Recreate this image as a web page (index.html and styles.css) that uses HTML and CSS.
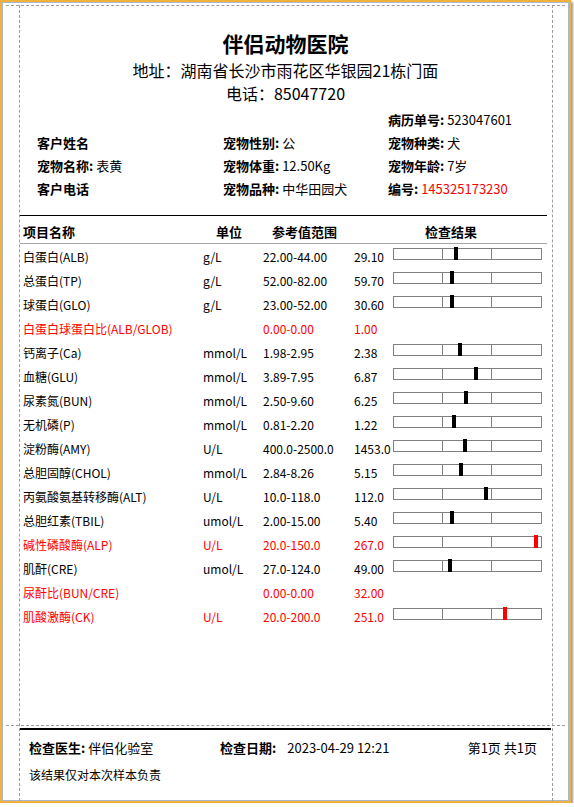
FILE: index.html
```html
<!DOCTYPE html>
<html lang="zh-CN">
<head>
<meta charset="utf-8">
<title>伴侣动物医院 检验报告</title>
<link rel="stylesheet" href="styles.css">
</head>
<body>
<div class="page">
  <div class="guide guide-h guide-top"></div>
  <div class="guide guide-h guide-bottom"></div>
  <div class="guide guide-v guide-left"></div>
  <div class="guide guide-v guide-right"></div>

  <header class="head">
    <h1 class="title">伴侣动物医院</h1>
    <p class="sub">地址：湖南省长沙市雨花区华银园21栋门面</p>
    <p class="sub">电话：85047720</p>
  </header>

  <div class="info">
    <div></div><div></div><div><b>病历单号:</b> 523047601</div>
    <div><b>客户姓名</b></div><div><b>宠物性别:</b> 公</div><div><b>宠物种类:</b> 犬</div>
    <div><b>宠物名称:</b> 表黄</div><div><b>宠物体重:</b> 12.50Kg</div><div><b>宠物年龄:</b> 7岁</div>
    <div><b>客户电话</b></div><div><b>宠物品种:</b> 中华田园犬</div><div><b>编号:</b> <span class="red">145325173230</span></div>
  </div>

  <div class="rule"></div>

  <div class="table">
    <div class="row thead">
      <div class="c-name">项目名称</div>
      <div class="c-unit">单位</div>
      <div class="c-ref">参考值范围</div>
      <div class="c-res">检查结果</div>
    </div>

    <div class="row"><div>白蛋白(ALB)</div><div>g/L</div><div>22.00-44.00</div><div>29.10</div><div class="bar"><i></i><i></i><i></i><span class="mark" style="left:60px"></span></div></div>
    <div class="row"><div>总蛋白(TP)</div><div>g/L</div><div>52.00-82.00</div><div>59.70</div><div class="bar"><i></i><i></i><i></i><span class="mark" style="left:56px"></span></div></div>
    <div class="row"><div>球蛋白(GLO)</div><div>g/L</div><div>23.00-52.00</div><div>30.60</div><div class="bar"><i></i><i></i><i></i><span class="mark" style="left:56px"></span></div></div>
    <div class="row red"><div>白蛋白球蛋白比(ALB/GLOB)</div><div></div><div>0.00-0.00</div><div>1.00</div><div></div></div>
    <div class="row"><div>钙离子(Ca)</div><div>mmol/L</div><div>1.98-2.95</div><div>2.38</div><div class="bar"><i></i><i></i><i></i><span class="mark" style="left:64px"></span></div></div>
    <div class="row"><div>血糖(GLU)</div><div>mmol/L</div><div>3.89-7.95</div><div>6.87</div><div class="bar"><i></i><i></i><i></i><span class="mark" style="left:80px"></span></div></div>
    <div class="row"><div>尿素氮(BUN)</div><div>mmol/L</div><div>2.50-9.60</div><div>6.25</div><div class="bar"><i></i><i></i><i></i><span class="mark" style="left:70px"></span></div></div>
    <div class="row"><div>无机磷(P)</div><div>mmol/L</div><div>0.81-2.20</div><div>1.22</div><div class="bar"><i></i><i></i><i></i><span class="mark" style="left:58px"></span></div></div>
    <div class="row"><div>淀粉酶(AMY)</div><div>U/L</div><div>400.0-2500.0</div><div>1453.0</div><div class="bar"><i></i><i></i><i></i><span class="mark" style="left:69px"></span></div></div>
    <div class="row"><div>总胆固醇(CHOL)</div><div>mmol/L</div><div>2.84-8.26</div><div>5.15</div><div class="bar"><i></i><i></i><i></i><span class="mark" style="left:65px"></span></div></div>
    <div class="row"><div>丙氨酸氨基转移酶(ALT)</div><div>U/L</div><div>10.0-118.0</div><div>112.0</div><div class="bar"><i></i><i></i><i></i><span class="mark" style="left:90px"></span></div></div>
    <div class="row"><div>总胆红素(TBIL)</div><div>umol/L</div><div>2.00-15.00</div><div>5.40</div><div class="bar"><i></i><i></i><i></i><span class="mark" style="left:56px"></span></div></div>
    <div class="row red"><div>碱性磷酸酶(ALP)</div><div>U/L</div><div>20.0-150.0</div><div>267.0</div><div class="bar"><i></i><i></i><i></i><span class="mark" style="left:140px"></span></div></div>
    <div class="row"><div>肌酐(CRE)</div><div>umol/L</div><div>27.0-124.0</div><div>49.00</div><div class="bar"><i></i><i></i><i></i><span class="mark" style="left:54px"></span></div></div>
    <div class="row red"><div>尿酐比(BUN/CRE)</div><div></div><div>0.00-0.00</div><div>32.00</div><div></div></div>
    <div class="row red"><div>肌酸激酶(CK)</div><div>U/L</div><div>20.0-200.0</div><div>251.0</div><div class="bar"><i></i><i></i><i></i><span class="mark" style="left:109px"></span></div></div>
  </div>

  <footer class="foot">
    <div class="foot-row">
      <div class="f-doc"><b>检查医生:</b> 伴侣化验室</div>
      <div class="f-date"><b>检查日期:</b><span class="f-date-val">2023-04-29 12:21</span></div>
      <div class="f-page">第1页 共1页</div>
    </div>
    <div class="note">该结果仅对本次样本负责</div>
  </footer>
</div>
</body>
</html>
```

FILE: styles.css
```css
* { box-sizing: border-box; }
html, body { margin: 0; padding: 0; background: #ffffff; }
body {
  font-family: "Noto Sans CJK SC", "Noto Sans", sans-serif;
  color: #000;
  font-size: 12px;
}
b { font-weight: bold; }
.red { color: #ff0000; }

.page {
  position: relative;
  width: 571px;
  height: 803px;
  border: 2px solid #f2b13a;
  box-shadow: inset 0 0 0 1px #a8b8d2, 2px 2px 2px #9a9a9a;
  background: #fff;
  display: flex;
  flex-direction: column;
  overflow: hidden;
}

.guide { position: absolute; pointer-events: none; }
.guide-h { left: 4px; right: 4px; height: 0; border-top: 1px dashed #9c9c9c; }
.guide-top { top: 3px; }
.guide-bottom { top: 723px; }
.guide-v { top: 3px; bottom: 0; width: 0; border-left: 1px dashed #9c9c9c; }
.guide-left { left: 17px; }
.guide-right { left: 550px; }

.head { padding-top: 28px; text-align: center; }
.title {
  margin: 0;
  font-size: 21px;
  line-height: 26px;
  font-weight: bold;
}
.sub {
  margin: 0;
  font-size: 16px;
  line-height: 22px;
}
.title + .sub { margin-top: 3px; }
.sub + .sub { margin-top: 1px; }

.info {
  margin-top: 4px;
  margin-left: 35px;
  display: grid;
  grid-template-columns: 186px 165px 1fr;
  grid-auto-rows: 23px;
  align-items: center;
  font-size: 13px;
  white-space: nowrap;
}

.rule {
  margin: 15px 0 0 18px;
  width: 527px;
  height: 1px;
  background: #000;
}

.table { margin-left: 18px; width: 527px; }
.row {
  display: grid;
  grid-template-columns: 183px 60px 91px 39px 154px;
  height: 24px;
  align-items: center;
  white-space: nowrap;
  font-size: 12px;
}
.row > div:first-child { padding-left: 3px; }
.thead {
  height: 28px;
  padding-top: 3px;
  border-bottom: 1px solid #a6a6a6;
  font-size: 13px;
  font-weight: bold;
}
.thead .c-unit { padding-left: 13px; }
.thead .c-ref { padding-left: 9px; }
.thead .c-res { grid-column: span 2; padding-left: 71px; }

.bar {
  position: relative;
  align-self: start;
  margin-top: 4px;
  width: 149px;
  height: 12px;
  border: 1px solid #808080;
  display: flex;
}
.bar i { display: block; height: 100%; }
.bar i:nth-child(1) { width: 48px; }
.bar i:nth-child(2) { width: 49px; border-left: 1px solid #808080; }
.bar i:nth-child(3) { width: 50px; border-left: 1px solid #808080; }
.mark {
  position: absolute;
  top: -2px;
  width: 4px;
  height: 13px;
  background: #000;
}
.row.red .mark { background: #ff0000; }

.foot { margin-top: auto; padding-bottom: 17px; }
.foot-row {
  margin-left: 18px;
  width: 531px;
  border-top: 2px solid #000;
  padding-top: 8px;
  display: grid;
  grid-template-columns: 200px 200px 1fr;
  height: 30px;
  line-height: 20px;
  font-size: 13px;
  white-space: nowrap;
}
.f-doc { padding-left: 9px; }
.f-date-val { margin-left: 11px; }
.f-page { text-align: right; padding-right: 14px; }
.note {
  margin-left: 27px;
  margin-top: 8px;
  line-height: 18px;
  font-size: 12px;
}
```
